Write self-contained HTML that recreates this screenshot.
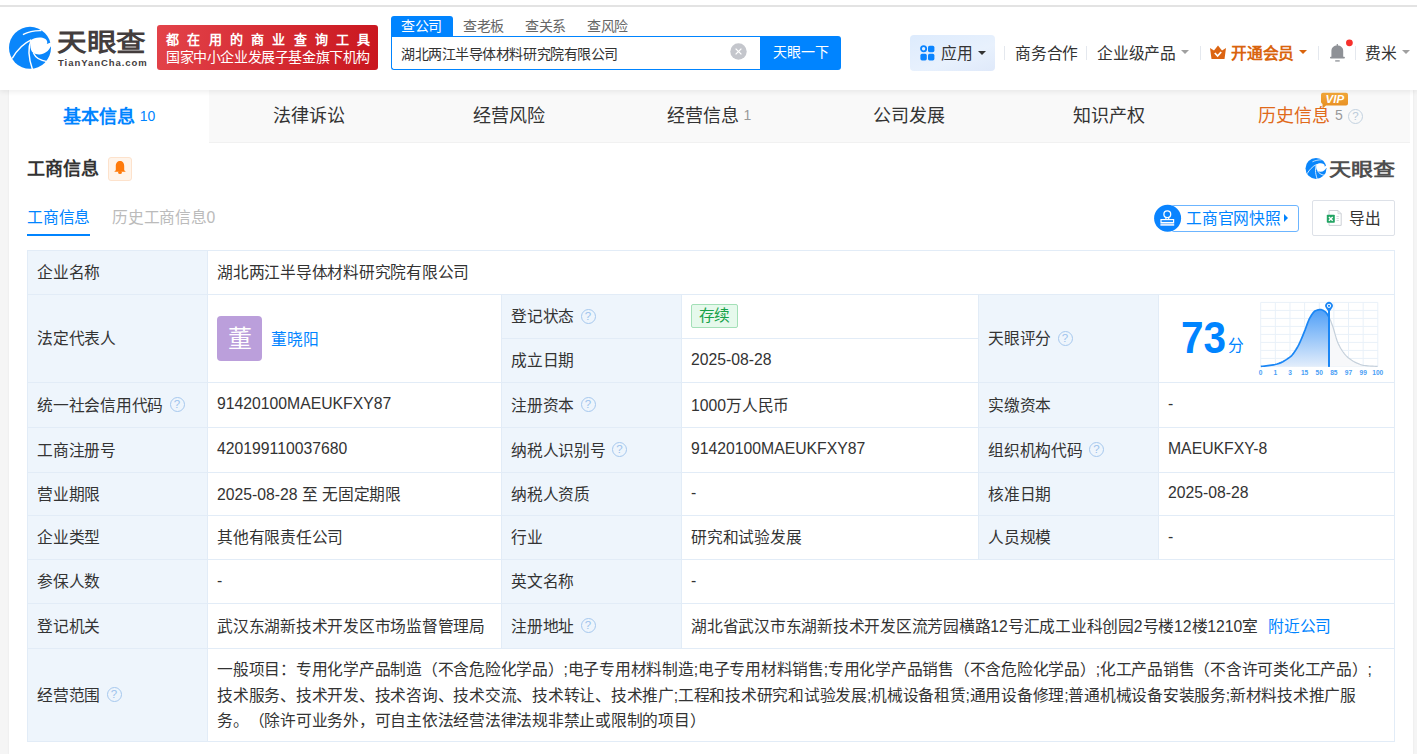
<!DOCTYPE html>
<html lang="zh-CN">
<head>
<meta charset="utf-8">
<style>
*{margin:0;padding:0;box-sizing:border-box}
html,body{text-spacing-trim:space-all;width:1417px;height:754px;overflow:hidden;background:#f5f5f5;font-family:"Liberation Sans",sans-serif;color:#333}
.abs{position:absolute;white-space:nowrap}
#hdr{position:absolute;z-index:5;left:0;top:0;width:1417px;height:90px;background:#fff;box-shadow:0 2px 5px rgba(0,0,0,.07)}
#topline{position:absolute;left:0;top:5px;width:1417px;height:2px;background:#e3e3e3}
#card{position:absolute;left:9px;top:90px;width:1404px;height:664px;background:#fff;box-shadow:0 0 2px rgba(0,0,0,.07)}
.tabbar{position:absolute;left:0;top:0;width:1401px;height:53px;background:#f9f9f9;border-bottom:1px solid #f1f1f1}
.tab{position:absolute;top:0;width:200px;height:53px;font-size:18px;line-height:52px;text-align:center;color:#333}
.tab.act{background:#fff;color:#0084ff;font-weight:bold;height:53px;line-height:54px}
.tab .n{font-size:14px;font-weight:normal;margin-left:5px;color:#999;position:relative;top:-2px}
.tab.act .n{color:#0084ff}
.t15{font-size:15.75px;line-height:20px;letter-spacing:-0.25px}
.l{letter-spacing:0}
.q{display:inline-block;width:15px;height:15px;border:1px solid #a6c8ee;border-radius:50%;color:#9cc2ec;font-size:11.5px;line-height:13px;text-align:center;vertical-align:2.5px;margin-left:6.5px;letter-spacing:0;font-weight:normal}
.cell{position:absolute;display:flex;align-items:center;padding-left:9px;padding-bottom:2px;font-size:15.75px;white-space:nowrap;color:#333;letter-spacing:-0.25px}
.ln{position:absolute;background:#e2ecf7}
.avatar{display:inline-block;vertical-align:middle;width:45px;height:45px;border-radius:4px;background:#bb9fdb;color:#fff;font-size:24px;line-height:45px;text-align:center;margin-right:9px;letter-spacing:0}
.tag{display:inline-block;border:1px solid #a3e0b7;background:#e6f9ec;color:#17a24a;border-radius:2px;padding:0 6.5px;height:24px;line-height:22px;position:relative;top:-1px}
.scope{line-height:25.4px;margin-top:3px}
.caret{position:absolute;width:0;height:0;border-left:4px solid transparent;border-right:4px solid transparent;border-top:4.5px solid #333}
.dv{position:absolute;width:1px;height:14px;background:#e4e8ee;top:46px}
</style>
</head>
<body>

<div id="hdr">
  <div id="topline"></div>
  <svg class="abs" style="left:8px;top:25px" width="44.00" height="45.00" viewBox="0 0 44 45">
    <circle cx="22" cy="22.8" r="21" fill="#0a86fb"/>
    <path d="M23.3 14.9 C25.5 12.8 33 11.5 37 13.8 C39.5 15.3 39.6 17.6 38.8 19.1 L45 16.5 L45 23 L42.7 21.5 C41 26 36 29.6 31 29.4 C28.5 29.3 26.8 28.7 25.4 28 C22 25.5 21.6 19 23.3 14.9 Z" fill="#fff"/>
    <path d="M4.2 33.4 C8.5 26 15 18.5 23.3 14.9" stroke="#fff" stroke-width="1.45" fill="none"/>
    <path d="M23.3 14.9 C20.2 21.5 19.8 31 24.5 44.5" stroke="#fff" stroke-width="1.45" fill="none"/>
    <path d="M25.4 28 C27 31.5 31.5 35.5 39 36.6" stroke="#fff" stroke-width="1.45" fill="none"/>
    <path d="M14.9 9.6 C20 7 27 5.5 33.4 5.7" stroke="#fff" stroke-width="1.305" fill="none"/>
    <path d="M33 3 L44 3 L44 9 Z" fill="#fff"/>
  </svg>
  <div class="abs" style="left:57px;top:27px;font-size:29px;line-height:34px;font-weight:bold;color:#433d3d;transform-origin:0 0;transform:scale(1.02,0.88)">天眼查</div>
  <div class="abs" style="left:58px;top:57px;font-size:9.5px;line-height:12px;font-weight:bold;color:#433d3d;letter-spacing:0.95px">TianYanCha.com</div>
  <div class="abs" style="left:157px;top:25px;width:221px;height:45px;border-radius:3px;background:linear-gradient(100deg,#e3434a,#c9161e)"></div>
  <div class="abs" style="left:166px;top:30.5px;font-size:13px;line-height:18px;color:#fff;letter-spacing:8.25px;font-weight:bold">都在用的商业查询工具</div>
  <div class="abs" style="left:166px;top:48px;font-size:14px;line-height:18px;color:#fff;letter-spacing:-0.4px">国家中小企业发展子基金旗下机构</div>
  <div class="abs" style="left:391px;top:16px;width:62px;height:21px;background:#0084ff;border-radius:3px 3px 0 0"></div>
  <div class="abs" style="left:401px;top:16px;font-size:14px;line-height:20px;color:#fff;letter-spacing:-0.3px">查公司</div>
  <div class="abs" style="left:463px;top:16px;font-size:14px;line-height:20px;color:#666;letter-spacing:-0.3px">查老板</div>
  <div class="abs" style="left:525px;top:16px;font-size:14px;line-height:20px;color:#666;letter-spacing:-0.3px">查关系</div>
  <div class="abs" style="left:587px;top:16px;font-size:14px;line-height:20px;color:#666;letter-spacing:-0.3px">查风险</div>
  <div class="abs" style="left:391px;top:36px;width:370px;height:34px;border:1px solid #0084ff;border-right:none;border-radius:0 0 0 3px;background:#fff"></div>
  <div class="abs" style="left:401px;top:44px;font-size:14px;line-height:20px;color:#333;letter-spacing:-0.45px">湖北两江半导体材料研究院有限公司</div>
  <svg class="abs" style="left:730px;top:43px" width="17" height="17" viewBox="0 0 17 17"><circle cx="8.5" cy="8.5" r="8.2" fill="#c4c6cc"/><path d="M5.6 5.6 L11.4 11.4 M11.4 5.6 L5.6 11.4" stroke="#fff" stroke-width="1.3"/></svg>
  <div class="abs" style="left:760px;top:36px;width:81px;height:34px;background:#0084ff;border-radius:0 3px 3px 0;color:#fff;font-size:14px;line-height:32px;text-align:center">天眼一下</div>
  <div class="abs" style="left:910px;top:35px;width:85px;height:36px;border-radius:4px;background:linear-gradient(160deg,#ddebfd,#e8f1fd 60%,#dfe9fa)"></div>
  <svg class="abs" style="left:920px;top:45px" width="15" height="16" viewBox="0 0 15 16">
    <circle cx="3.6" cy="3.8" r="2.6" fill="none" stroke="#0a84ff" stroke-width="1.8"/>
    <rect x="8" y="0.8" width="6.4" height="6.4" rx="1.6" fill="#0a84ff"/>
    <rect x="0.4" y="8.8" width="6.4" height="6.6" rx="1.6" fill="#0a84ff"/>
    <rect x="8" y="8.8" width="6.4" height="6.6" rx="1.6" fill="#0a84ff"/>
  </svg>
  <div class="abs t15" style="left:941px;top:44px">应用</div>
  <div class="caret" style="left:978px;top:51px"></div>
  <div class="dv" style="left:1004px"></div>
  <div class="abs t15" style="left:1015px;top:44px">商务合作</div>
  <div class="dv" style="left:1086px"></div>
  <div class="abs t15" style="left:1097px;top:44px">企业级产品</div>
  <div class="caret" style="left:1181px;top:50px;border-top-color:#a0a0a0"></div>
  <div class="dv" style="left:1200px"></div>
  <svg class="abs" style="left:1209px;top:45px" width="18" height="15" viewBox="0 0 18 15">
    <path d="M1 3 L5 5.5 L9 0.5 L13 5.5 L17 3 L15.5 14 L2.5 14 Z" fill="#dc6412"/>
    <path d="M5.8 8 L8.6 11 L12.2 7" stroke="#fff" stroke-width="1.8" fill="none"/>
  </svg>
  <div class="abs t15" style="left:1231px;top:44px;color:#d9640d;font-weight:bold">开通会员</div>
  <div class="caret" style="left:1299px;top:50px;border-top-color:#d9640d"></div>
  <div class="dv" style="left:1318px"></div>
  <svg class="abs" style="left:1320px;top:35px" width="40" height="30" viewBox="1320 35 40 30">
    <path d="M1331.4 57.2 V50.8 C1331.4 47.4 1334 45.4 1337.3 45.4 C1340.6 45.4 1343.2 47.4 1343.2 50.8 V57.2 Z" fill="#8e9196"/>
    <rect x="1330" y="56.8" width="14.9" height="1.7" rx="0.8" fill="#8e9196"/>
    <rect x="1336.7" y="44" width="1.2" height="2.2" fill="#8e9196"/>
    <rect x="1335.2" y="60.1" width="4.5" height="1.6" fill="#a3a6aa"/>
    <circle cx="1349.4" cy="42.8" r="3.4" fill="#f7302c"/>
  </svg>
  <div class="dv" style="left:1355px"></div>
  <div class="abs t15" style="left:1365px;top:43.5px">费米</div>
  <div class="caret" style="left:1402px;top:50px;border-top-color:#a0a0a0"></div>
</div>


<div id="card">
  <div class="tabbar"></div>
  <div class="tab act" style="left:0">基本信息<span class="n">10</span></div>
  <div class="tab" style="left:200px">法律诉讼</div>
  <div class="tab" style="left:400px">经营风险</div>
  <div class="tab" style="left:600px">经营信息<span class="n">1</span></div>
  <div class="tab" style="left:800px">公司发展</div>
  <div class="tab" style="left:1000px">知识产权</div>
  <div class="tab" style="left:1200px;color:#e06a1b;padding-left:3px">历史信息<span class="n">5</span><span class="q" style="border-color:#c3d2e0;color:#b8c8d8;vertical-align:2px;margin-left:5px">?</span></div>
  <svg class="abs" style="left:1312px;top:2px" width="28" height="17" viewBox="0 0 28 17">
    <defs><linearGradient id="vg" x1="0" y1="0" x2="0" y2="1"><stop offset="0" stop-color="#f3a83a"/><stop offset="1" stop-color="#e58b1e"/></linearGradient></defs>
    <path d="M2 0.8 H25 Q27 0.8 27 2.8 V11.5 Q27 13.5 25 13.5 H5 L1.5 16.5 L1.5 12 Q0 11 0 10 V2.8 Q0 0.8 2 0.8 Z" fill="url(#vg)"/>
    <text x="13.8" y="11" font-family="Liberation Sans" font-weight="bold" font-style="italic" font-size="11.5" fill="#fff" text-anchor="middle">VIP</text>
  </svg>
  <div class="abs" style="left:18px;top:67px;font-size:18px;line-height:24px;font-weight:bold;color:#333">工商信息</div>
  <div class="abs" style="left:99px;top:67px;width:24px;height:24px;border:1px solid #fde2cc;border-radius:3px;background:#fff4ea"></div>
  <svg class="abs" style="left:104px;top:70px" width="14" height="15" viewBox="0 0 14 15">
    <path d="M7 1 C3.8 1 2.8 3.6 2.8 6.3 L2.8 10.2 L1.2 11.8 L12.8 11.8 L11.2 10.2 L11.2 6.3 C11.2 3.6 10.2 1 7 1 Z" fill="#ff7a0a"/>
    <ellipse cx="7" cy="12.4" rx="1.9" ry="1.5" fill="#ff7a0a"/>
  </svg>
  <svg class="abs" style="left:1296px;top:67px" width="22.00" height="22.50" viewBox="0 0 44 45">
    <circle cx="22" cy="22.8" r="21" fill="#0a86fb"/>
    <path d="M23.3 14.9 C25.5 12.8 33 11.5 37 13.8 C39.5 15.3 39.6 17.6 38.8 19.1 L45 16.5 L45 23 L42.7 21.5 C41 26 36 29.6 31 29.4 C28.5 29.3 26.8 28.7 25.4 28 C22 25.5 21.6 19 23.3 14.9 Z" fill="#fff"/>
    <path d="M4.2 33.4 C8.5 26 15 18.5 23.3 14.9" stroke="#fff" stroke-width="1.6" fill="none"/>
    <path d="M23.3 14.9 C20.2 21.5 19.8 31 24.5 44.5" stroke="#fff" stroke-width="1.6" fill="none"/>
    <path d="M25.4 28 C27 31.5 31.5 35.5 39 36.6" stroke="#fff" stroke-width="1.6" fill="none"/>
    <path d="M14.9 9.6 C20 7 27 5.5 33.4 5.7" stroke="#fff" stroke-width="1.4400000000000002" fill="none"/>
    <path d="M33 3 L44 3 L44 9 Z" fill="#fff"/>
  </svg>
  <div class="abs" style="left:1320px;top:70px;font-size:21px;line-height:24px;font-weight:bold;color:#4f4f4f;transform-origin:0 0;transform:scale(1.05,0.85)">天眼查</div>
  <div class="abs t15" style="left:18px;top:118px;color:#0084ff">工商信息</div>
  <div class="abs" style="left:18px;top:144px;width:63px;height:2px;background:#0084ff"></div>
  <div class="abs t15" style="left:103px;top:118px;color:#bbb">历史工商信息<span class="l">0</span></div>
  <div class="abs" style="left:1162px;top:115px;width:128px;height:27px;border:1px solid #6cb5ff;border-radius:3px;background:#fff"></div>
  <svg class="abs" style="left:1139px;top:110px" width="40" height="36" viewBox="1148 200 40 36">
    <circle cx="1167.6" cy="218.3" r="13.5" fill="#0a84ff"/>
    <circle cx="1167.3" cy="214.3" r="3.4" fill="none" stroke="#fff" stroke-width="1.3"/>
    <path d="M1165.9 217.3 V219.2 M1168.7 217.3 V219.2" stroke="#fff" stroke-width="1.2"/>
    <rect x="1161" y="219.6" width="12.6" height="2.9" fill="#0a84ff" stroke="#fff" stroke-width="1.2"/>
    <rect x="1160.4" y="223.4" width="13.8" height="2.4" fill="#dce9fc"/>
  </svg>
  <div class="abs t15" style="left:1177px;top:119px;color:#0084ff">工商官网快照</div>
  <div class="abs" style="left:1275px;top:124px;width:0;height:0;border-top:4px solid transparent;border-bottom:4px solid transparent;border-left:4px solid #0084ff"></div>
  <div class="abs" style="left:1303px;top:110px;width:83px;height:36px;border:1px solid #dde1e8;border-radius:2px;background:#fff"></div>
  <svg class="abs" style="left:1317px;top:119px" width="17" height="18" viewBox="0 0 17 18">
    <path d="M3 1.5 H12 L15.2 4.7 V16.4 H3 Z" fill="#fff" stroke="#ccd0d6" stroke-width="1"/>
    <path d="M12 1.5 V4.7 H15.2" fill="none" stroke="#ccd0d6" stroke-width="0.8"/>
    <path d="M10.5 7.5 H12.8 M10.5 9.5 H12.8 M10.5 11.5 H12.8" stroke="#d5d9de" stroke-width="1"/>
    <rect x="0.8" y="5.8" width="8" height="8" rx="0.8" fill="#22a463"/>
    <path d="M2.9 7.9 L6.7 11.7 M6.7 7.9 L2.9 11.7" stroke="#fff" stroke-width="1.4"/>
  </svg>
  <div class="abs t15" style="left:1340px;top:119px">导出</div>
</div>

<div class="cell" style="left:28px;top:251px;width:179px;height:43px;background:#eef5fc"><div>企业名称</div></div>
<div class="cell" style="left:208px;top:251px;width:1186px;height:43px;background:#fff"><div>湖北两江半导体材料研究院有限公司</div></div>
<div class="cell" style="left:28px;top:383px;width:179px;height:44px;background:#eef5fc"><div>统一社会信用代码<span class="q">?</span></div></div>
<div class="cell" style="left:208px;top:383px;width:293px;height:44px;background:#fff"><div><span class="l">91420100MAEUKFXY87</span></div></div>
<div class="cell" style="left:502px;top:383px;width:179px;height:44px;background:#eef5fc"><div>注册资本<span class="q">?</span></div></div>
<div class="cell" style="left:682px;top:383px;width:296px;height:44px;background:#fff"><div><span class="l">1000</span>万人民币</div></div>
<div class="cell" style="left:979px;top:383px;width:179px;height:44px;background:#eef5fc"><div>实缴资本</div></div>
<div class="cell" style="left:1159px;top:383px;width:235px;height:44px;background:#fff"><div><span class="l">-</span></div></div>
<div class="cell" style="left:28px;top:428px;width:179px;height:44px;background:#eef5fc"><div>工商注册号</div></div>
<div class="cell" style="left:208px;top:428px;width:293px;height:44px;background:#fff"><div><span class="l">420199110037680</span></div></div>
<div class="cell" style="left:502px;top:428px;width:179px;height:44px;background:#eef5fc"><div>纳税人识别号<span class="q">?</span></div></div>
<div class="cell" style="left:682px;top:428px;width:296px;height:44px;background:#fff"><div><span class="l">91420100MAEUKFXY87</span></div></div>
<div class="cell" style="left:979px;top:428px;width:179px;height:44px;background:#eef5fc"><div>组织机构代码<span class="q">?</span></div></div>
<div class="cell" style="left:1159px;top:428px;width:235px;height:44px;background:#fff"><div><span class="l">MAEUKFXY-8</span></div></div>
<div class="cell" style="left:28px;top:473px;width:179px;height:42px;background:#eef5fc"><div>营业期限</div></div>
<div class="cell" style="left:208px;top:473px;width:293px;height:42px;background:#fff"><div><span class="l">2025-08-28 </span>至<span class="l"> </span>无固定期限</div></div>
<div class="cell" style="left:502px;top:473px;width:179px;height:42px;background:#eef5fc"><div>纳税人资质</div></div>
<div class="cell" style="left:682px;top:473px;width:296px;height:42px;background:#fff"><div><span class="l">-</span></div></div>
<div class="cell" style="left:979px;top:473px;width:179px;height:42px;background:#eef5fc"><div>核准日期</div></div>
<div class="cell" style="left:1159px;top:473px;width:235px;height:42px;background:#fff"><div><span class="l">2025-08-28</span></div></div>
<div class="cell" style="left:28px;top:516px;width:179px;height:43px;background:#eef5fc"><div>企业类型</div></div>
<div class="cell" style="left:208px;top:516px;width:293px;height:43px;background:#fff"><div>其他有限责任公司</div></div>
<div class="cell" style="left:502px;top:516px;width:179px;height:43px;background:#eef5fc"><div>行业</div></div>
<div class="cell" style="left:682px;top:516px;width:296px;height:43px;background:#fff"><div>研究和试验发展</div></div>
<div class="cell" style="left:979px;top:516px;width:179px;height:43px;background:#eef5fc"><div>人员规模</div></div>
<div class="cell" style="left:1159px;top:516px;width:235px;height:43px;background:#fff"><div><span class="l">-</span></div></div>
<div class="cell" style="left:28px;top:560px;width:179px;height:43px;background:#eef5fc"><div>参保人数</div></div>
<div class="cell" style="left:208px;top:560px;width:293px;height:43px;background:#fff"><div><span class="l">-</span></div></div>
<div class="cell" style="left:502px;top:560px;width:179px;height:43px;background:#eef5fc"><div>英文名称</div></div>
<div class="cell" style="left:682px;top:560px;width:712px;height:43px;background:#fff"><div><span class="l">-</span></div></div>
<div class="cell" style="left:28px;top:604px;width:179px;height:44px;background:#eef5fc"><div>登记机关</div></div>
<div class="cell" style="left:208px;top:604px;width:293px;height:44px;background:#fff"><div>武汉东湖新技术开发区市场监督管理局</div></div>
<div class="cell" style="left:502px;top:604px;width:179px;height:44px;background:#eef5fc"><div>注册地址<span class="q">?</span></div></div>
<div class="cell" style="left:682px;top:604px;width:712px;height:44px;background:#fff"><div>湖北省武汉市东湖新技术开发区流芳园横路<span class="l">12</span>号汇成工业科创园<span class="l">2</span>号楼<span class="l">12</span>楼<span class="l">1210</span>室<span style="color:#0084ff;margin-left:10px">附近公司</span></div></div>
<div class="cell" style="left:28px;top:295px;width:179px;height:87px;background:#eef5fc"><div>法定代表人</div></div>
<div class="cell" style="left:208px;top:295px;width:293px;height:87px;background:#fff;padding-bottom:0"><div><span class="avatar">董</span><span style="color:#0084ff;vertical-align:middle">董晓阳</span></div></div>
<div class="cell" style="left:502px;top:295px;width:179px;height:43px;background:#eef5fc"><div>登记状态<span class="q">?</span></div></div>
<div class="cell" style="left:682px;top:295px;width:296px;height:43px;background:#fff;padding-bottom:0"><div><span class="tag">存续</span></div></div>
<div class="cell" style="left:502px;top:339px;width:179px;height:43px;background:#eef5fc"><div>成立日期</div></div>
<div class="cell" style="left:682px;top:339px;width:296px;height:43px;background:#fff"><div><span class="l">2025-08-28</span></div></div>
<div class="cell" style="left:979px;top:295px;width:179px;height:87px;background:#eef5fc"><div>天眼评分<span class="q">?</span></div></div>
<div class="cell" style="left:1159px;top:295px;width:235px;height:87px;background:#fff"><div></div></div>
<div class="cell" style="left:28px;top:649px;width:179px;height:92px;background:#eef5fc"><div>经营范围<span class="q">?</span></div></div>
<div class="cell" style="left:208px;top:649px;width:1186px;height:92px;background:#fff"><div><div class="scope">一般项目：专用化学产品制造（不含危险化学品）;电子专用材料制造;电子专用材料销售;专用化学产品销售（不含危险化学品）;化工产品销售（不含许可类化工产品）;<br>技术服务、技术开发、技术咨询、技术交流、技术转让、技术推广;工程和技术研究和试验发展;机械设备租赁;通用设备修理;普通机械设备安装服务;新材料技术推广服<br>务。（除许可业务外，可自主依法经营法律法规非禁止或限制的项目）</div></div></div>
<div class="ln" style="left:27px;top:250px;width:1368px;height:1px"></div>
<div class="ln" style="left:27px;top:741px;width:1368px;height:1px"></div>
<div class="ln" style="left:27px;top:250px;width:1px;height:492px"></div>
<div class="ln" style="left:1394px;top:250px;width:1px;height:492px"></div>
<div class="ln" style="left:27px;top:294px;width:1368px;height:1px"></div>
<div class="ln" style="left:27px;top:382px;width:1368px;height:1px"></div>
<div class="ln" style="left:27px;top:427px;width:1368px;height:1px"></div>
<div class="ln" style="left:27px;top:472px;width:1368px;height:1px"></div>
<div class="ln" style="left:27px;top:515px;width:1368px;height:1px"></div>
<div class="ln" style="left:27px;top:559px;width:1368px;height:1px"></div>
<div class="ln" style="left:27px;top:603px;width:1368px;height:1px"></div>
<div class="ln" style="left:27px;top:648px;width:1368px;height:1px"></div>
<div class="ln" style="left:501px;top:338px;width:477px;height:1px"></div>
<div class="ln" style="left:207px;top:250px;width:1px;height:492px"></div>
<div class="ln" style="left:501px;top:294px;width:1px;height:355px"></div>
<div class="ln" style="left:681px;top:294px;width:1px;height:355px"></div>
<div class="ln" style="left:978px;top:294px;width:1px;height:266px"></div>
<div class="ln" style="left:1158px;top:294px;width:1px;height:266px"></div>
<div class="abs" style="left:1181px;top:314px;font-size:44px;line-height:48px;font-weight:bold;color:#0084ff;transform-origin:0 0;transform:scaleX(0.92)">73</div>
<div class="abs" style="left:1228px;top:336px;font-size:15.75px;line-height:20px;color:#0084ff">分</div>

<svg class="abs" style="left:1255px;top:296px" width="130" height="82" viewBox="1255 296 130 82">
<defs><linearGradient id="bf" x1="0" y1="0" x2="0" y2="1"><stop offset="0" stop-color="#4f9ff7"/><stop offset="1" stop-color="#e2edfb"/></linearGradient></defs>
<g stroke="#e9f1f9" stroke-width="1"><line x1="1260.70" y1="302.4" x2="1260.70" y2="366.4"/><line x1="1260.7" y1="302.40" x2="1377.8" y2="302.40"/><line x1="1275.34" y1="302.4" x2="1275.34" y2="366.4"/><line x1="1260.7" y1="310.40" x2="1377.8" y2="310.40"/><line x1="1289.97" y1="302.4" x2="1289.97" y2="366.4"/><line x1="1260.7" y1="318.40" x2="1377.8" y2="318.40"/><line x1="1304.61" y1="302.4" x2="1304.61" y2="366.4"/><line x1="1260.7" y1="326.40" x2="1377.8" y2="326.40"/><line x1="1319.25" y1="302.4" x2="1319.25" y2="366.4"/><line x1="1260.7" y1="334.40" x2="1377.8" y2="334.40"/><line x1="1333.89" y1="302.4" x2="1333.89" y2="366.4"/><line x1="1260.7" y1="342.40" x2="1377.8" y2="342.40"/><line x1="1348.53" y1="302.4" x2="1348.53" y2="366.4"/><line x1="1260.7" y1="350.40" x2="1377.8" y2="350.40"/><line x1="1363.16" y1="302.4" x2="1363.16" y2="366.4"/><line x1="1260.7" y1="358.40" x2="1377.8" y2="358.40"/><line x1="1377.80" y1="302.4" x2="1377.80" y2="366.4"/><line x1="1260.7" y1="366.40" x2="1377.8" y2="366.40"/></g>
<path d="M1329.00 317.20 L1329.00 317.20 L1329.49 318.14 L1329.97 319.19 L1330.46 320.33 L1330.95 321.56 L1331.44 322.84 L1331.93 324.17 L1332.41 325.53 L1332.90 326.90 L1333.48 328.63 L1334.05 330.53 L1334.62 332.55 L1335.20 334.61 L1335.78 336.63 L1336.35 338.55 L1336.92 340.30 L1337.50 341.80 L1338.20 343.40 L1338.90 344.89 L1339.60 346.29 L1340.30 347.59 L1341.00 348.81 L1341.70 349.95 L1342.40 351.01 L1343.10 352.00 L1343.79 352.92 L1344.47 353.79 L1345.16 354.61 L1345.85 355.39 L1346.54 356.12 L1347.22 356.80 L1347.91 357.43 L1348.60 358.00 L1349.65 358.81 L1350.70 359.57 L1351.75 360.28 L1352.80 360.94 L1353.85 361.56 L1354.90 362.12 L1355.95 362.63 L1357.00 363.10 L1357.92 363.49 L1358.85 363.87 L1359.78 364.24 L1360.70 364.58 L1361.62 364.88 L1362.55 365.15 L1363.48 365.35 L1364.40 365.50 L1366.05 365.68 L1367.70 365.84 L1369.35 365.98 L1371.00 366.09 L1372.65 366.19 L1374.30 366.27 L1375.95 366.34 L1377.60 366.40 L1377.8 366.4 L1329 366.4 Z" fill="#f7f8fa"/>
<path d="M1329.00 317.20 L1329.00 317.20 L1329.49 318.14 L1329.97 319.19 L1330.46 320.33 L1330.95 321.56 L1331.44 322.84 L1331.93 324.17 L1332.41 325.53 L1332.90 326.90 L1333.48 328.63 L1334.05 330.53 L1334.62 332.55 L1335.20 334.61 L1335.78 336.63 L1336.35 338.55 L1336.92 340.30 L1337.50 341.80 L1338.20 343.40 L1338.90 344.89 L1339.60 346.29 L1340.30 347.59 L1341.00 348.81 L1341.70 349.95 L1342.40 351.01 L1343.10 352.00 L1343.79 352.92 L1344.47 353.79 L1345.16 354.61 L1345.85 355.39 L1346.54 356.12 L1347.22 356.80 L1347.91 357.43 L1348.60 358.00 L1349.65 358.81 L1350.70 359.57 L1351.75 360.28 L1352.80 360.94 L1353.85 361.56 L1354.90 362.12 L1355.95 362.63 L1357.00 363.10 L1357.92 363.49 L1358.85 363.87 L1359.78 364.24 L1360.70 364.58 L1361.62 364.88 L1362.55 365.15 L1363.48 365.35 L1364.40 365.50 L1366.05 365.68 L1367.70 365.84 L1369.35 365.98 L1371.00 366.09 L1372.65 366.19 L1374.30 366.27 L1375.95 366.34 L1377.60 366.40" fill="none" stroke="#c5d0db" stroke-width="1.2"/>
<path d="M1260.80 366.40 L1262.60 366.27 L1264.40 366.11 L1266.20 365.92 L1268.00 365.71 L1269.80 365.46 L1271.60 365.18 L1273.40 364.86 L1275.20 364.50 L1277.11 364.02 L1279.03 363.38 L1280.94 362.60 L1282.85 361.67 L1284.76 360.60 L1286.67 359.39 L1288.59 358.06 L1290.50 356.60 L1291.42 355.77 L1292.35 354.78 L1293.28 353.64 L1294.20 352.36 L1295.12 350.98 L1296.05 349.52 L1296.98 347.98 L1297.90 346.40 L1298.71 344.90 L1299.53 343.24 L1300.34 341.44 L1301.15 339.54 L1301.96 337.57 L1302.78 335.57 L1303.59 333.57 L1304.40 331.60 L1305.10 329.85 L1305.80 327.97 L1306.50 326.03 L1307.20 324.09 L1307.90 322.21 L1308.60 320.46 L1309.30 318.90 L1310.00 317.60 L1310.70 316.45 L1311.40 315.32 L1312.10 314.25 L1312.80 313.26 L1313.50 312.38 L1314.20 311.64 L1314.90 311.07 L1315.60 310.70 L1316.21 310.48 L1316.82 310.27 L1317.44 310.08 L1318.05 309.92 L1318.66 309.79 L1319.28 309.69 L1319.89 309.62 L1320.50 309.60 L1321.06 309.64 L1321.62 309.77 L1322.19 309.96 L1322.75 310.22 L1323.31 310.52 L1323.88 310.86 L1324.44 311.22 L1325.00 311.60 L1325.50 312.00 L1326.00 312.52 L1326.50 313.14 L1327.00 313.84 L1327.50 314.62 L1328.00 315.44 L1328.50 316.31 L1329.00 317.20 L1329.00 317.20 L1329 366.4 L1260.7 366.4 Z" fill="url(#bf)"/>
<path d="M1260.80 366.40 L1262.60 366.27 L1264.40 366.11 L1266.20 365.92 L1268.00 365.71 L1269.80 365.46 L1271.60 365.18 L1273.40 364.86 L1275.20 364.50 L1277.11 364.02 L1279.03 363.38 L1280.94 362.60 L1282.85 361.67 L1284.76 360.60 L1286.67 359.39 L1288.59 358.06 L1290.50 356.60 L1291.42 355.77 L1292.35 354.78 L1293.28 353.64 L1294.20 352.36 L1295.12 350.98 L1296.05 349.52 L1296.98 347.98 L1297.90 346.40 L1298.71 344.90 L1299.53 343.24 L1300.34 341.44 L1301.15 339.54 L1301.96 337.57 L1302.78 335.57 L1303.59 333.57 L1304.40 331.60 L1305.10 329.85 L1305.80 327.97 L1306.50 326.03 L1307.20 324.09 L1307.90 322.21 L1308.60 320.46 L1309.30 318.90 L1310.00 317.60 L1310.70 316.45 L1311.40 315.32 L1312.10 314.25 L1312.80 313.26 L1313.50 312.38 L1314.20 311.64 L1314.90 311.07 L1315.60 310.70 L1316.21 310.48 L1316.82 310.27 L1317.44 310.08 L1318.05 309.92 L1318.66 309.79 L1319.28 309.69 L1319.89 309.62 L1320.50 309.60 L1321.06 309.64 L1321.62 309.77 L1322.19 309.96 L1322.75 310.22 L1323.31 310.52 L1323.88 310.86 L1324.44 311.22 L1325.00 311.60 L1325.50 312.00 L1326.00 312.52 L1326.50 313.14 L1327.00 313.84 L1327.50 314.62 L1328.00 315.44 L1328.50 316.31 L1329.00 317.20 L1329.00 317.20" fill="none" stroke="#1a86f5" stroke-width="1.7"/>
<rect x="1328" y="308" width="2" height="58.89999999999998" fill="#1a86f5"/>
<path d="M1329 312.6 L1325.8 307.8 A3.8 3.8 0 1 1 1332.2 307.8 Z" fill="#1a86f5"/>
<circle cx="1329" cy="305.8" r="2.1" fill="#fff"/>
<circle cx="1329" cy="305.8" r="1.1" fill="#1a86f5"/>
<g font-family="Liberation Sans" font-size="6.6" font-weight="bold" fill="#4a9ef5" text-anchor="middle"><text x="1260.70" y="374.6">0</text><text x="1275.34" y="374.6">1</text><text x="1289.97" y="374.6">3</text><text x="1304.61" y="374.6">15</text><text x="1319.25" y="374.6">50</text><text x="1333.89" y="374.6">85</text><text x="1348.53" y="374.6">97</text><text x="1363.16" y="374.6">99</text><text x="1377.80" y="374.6">100</text></g>
</svg>
</body>
</html>
